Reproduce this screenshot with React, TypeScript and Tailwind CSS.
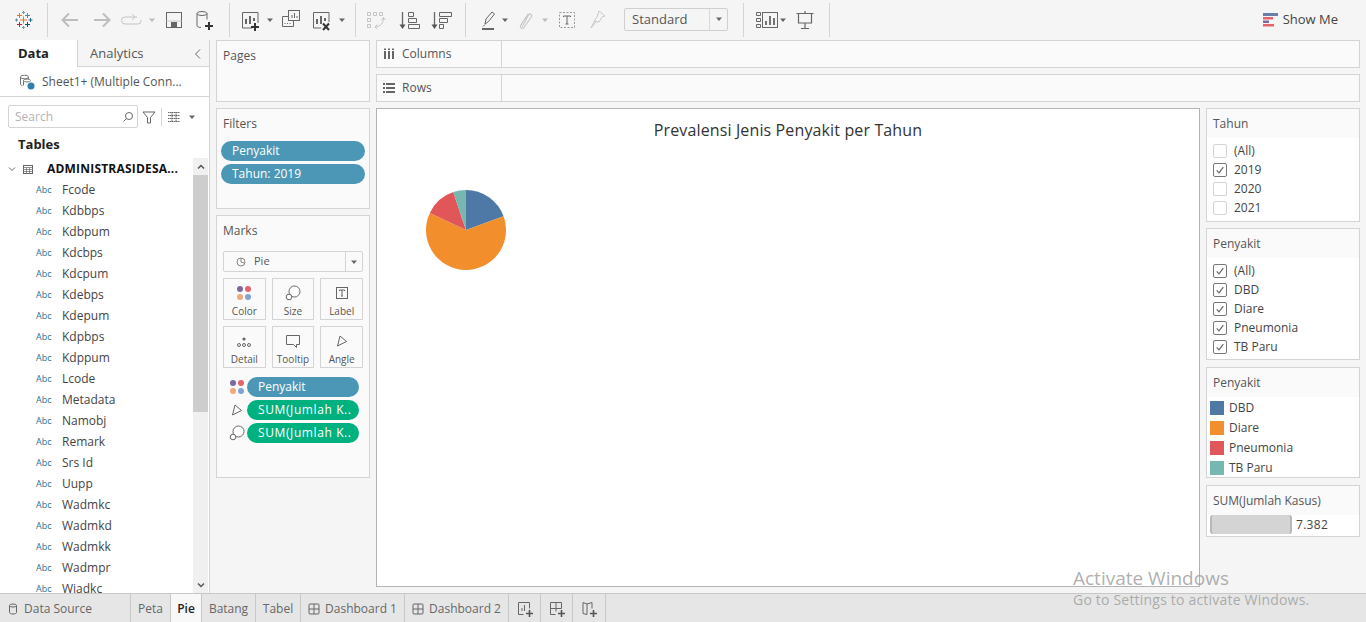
import React from 'react';

const fields = ['Fcode', 'Kdbbps', 'Kdbpum', 'Kdcbps', 'Kdcpum', 'Kdebps', 'Kdepum', 'Kdpbps', 'Kdppum', 'Lcode', 'Metadata', 'Namobj', 'Remark', 'Srs Id', 'Uupp', 'Wadmkc', 'Wadmkd', 'Wadmkk', 'Wadmpr', 'Wiadkc'];

const Icon = ({ className = '', children, stroke = '#666' }: { className?: string; children: React.ReactNode; stroke?: string }) => (
  <svg viewBox="0 0 24 24" width="24" height="24" fill="none" stroke={stroke} strokeWidth="1" className={`shrink-0 ${className}`}>
    {children}
  </svg>
);

const Caret = ({ className = '', color = '#666' }: { className?: string; color?: string }) => (
  <svg viewBox="0 0 8 8" width="8" height="8" className={`shrink-0 ${className}`}>
    <path d="M1 2.500h6L4 6z" fill={color} />
  </svg>
);

const Sep = ({ className = '' }: { className?: string }) => <div className={`w-px h-[34px] bg-[#d4d4d4] shrink-0 ${className}`} />;

const Plus = ({ x, y, c, s = 2.5, w = 1 }: { x: number; y: number; c: string; s?: number; w?: number }) => (
  <path d={`M${x - s} ${y}h${s * 2}M${x} ${y - s}v${s * 2}`} stroke={c} strokeWidth={w} />
);

const ColorDots = () => (
  <svg viewBox="0 0 18 18" width="18" height="18" className="shrink-0">
    <circle cx="5" cy="5" r="3" fill="#7b6a9b" />
    <circle cx="13" cy="5" r="3" fill="#e5646c" />
    <circle cx="5" cy="13" r="3" fill="#f2a879" />
    <circle cx="13" cy="13" r="3" fill="#7fa4cf" />
  </svg>
);

const SizeGlyph = () => (
  <svg viewBox="0 0 18 18" width="18" height="18" fill="none" stroke="#666" className="shrink-0">
    <circle cx="10.500" cy="7.500" r="5.500" fill="white" />
    <circle cx="5" cy="13" r="2.800" fill="white" />
  </svg>
);

const AngleGlyph = () => (
  <svg viewBox="0 0 18 18" width="18" height="18" fill="none" stroke="#666" className="shrink-0">
    <path d="M7 4l6.500 5.500L4.500 14z" />
  </svg>
);

const MarkButton = ({ label, children }: { label: string; children: React.ReactNode }) => (
  <div className="h-[42px] border border-[#d4d4d4] flex flex-col items-center justify-between pt-[5px] pb-[1px] text-[10px] leading-[14px] text-[#555]">
    <div className="h-[18px] flex items-center justify-center">{children}</div>
    <span>{label}</span>
  </div>
);

const Pill = ({ label, green = false }: { label: string; green?: boolean }) => (
  <div className={`h-5 rounded-full pl-[11px] text-[12px] leading-5 text-white whitespace-nowrap ${green ? 'bg-[#00b180] tracking-[0.6px]' : 'bg-[#4b97b5]'}`}>{label}</div>
);

const Check = ({ on, label }: { on: boolean; label: string }) => (
  <div className="h-[19px] flex items-center pl-[6px] gap-[7px] text-[12px] text-[#444]">
    <span className={`w-[14px] h-[14px] rounded-[2px] border flex items-center justify-center ${on ? 'border-[#777]' : 'border-[#d4d4d4]'}`}>
      {on && (
        <svg viewBox="0 0 12 12" width="10" height="10" fill="none" stroke="#666" strokeWidth="1.400">
          <path d="M2 6.500l2.800 3L10 2.500" />
        </svg>
      )}
    </span>
    {label}
  </div>
);

const CardHeader = ({ title }: { title: string }) => (
  <div className="h-[29px] bg-[#fafafa] pl-[6px] flex items-center text-[12px] text-[#555] whitespace-nowrap">{title}</div>
);

const ShelfRow = ({ label, icon }: { label: string; icon: React.ReactNode }) => (
  <div className="h-[28px] flex border border-[#d4d4d4] bg-[#fafafa]">
    <div className="w-[125px] border-r border-[#d4d4d4] flex items-center pl-[6px] gap-[7px] text-[12px] text-[#555]">
      {icon}
      {label}
    </div>
  </div>
);

const Tab = ({ w, active = false, children }: { w: string; active?: boolean; children: React.ReactNode }) => (
  <div className={`${w} shrink-0 h-full pt-px flex items-center justify-center gap-[5px] border-r border-[#c8c8c8] text-[12px] ${active ? 'bg-[#f8f8f8] text-[#222] font-semibold' : 'text-[#666]'}`}>
    {children}
  </div>
);

const DashGlyph = () => (
  <svg viewBox="0 0 12 12" width="12" height="12" fill="none" stroke="#666">
    <rect x="1" y="1" width="10" height="10" rx="1" />
    <path d="M6 1v10M1 6h10" />
  </svg>
);

const TabAdd = ({ children }: { children: React.ReactNode }) => (
  <svg viewBox="0 0 18 18" width="18" height="18" fill="none" stroke="#666">
    {children}
    <path d="M10 13.500h7M13.500 10v7" strokeWidth="1.600" stroke="#555" />
  </svg>
);

export default function App() {
  return (
    <div className="relative w-[1366px] h-[622px] overflow-hidden bg-[#f5f5f5] flex flex-col font-['Open_Sans','Liberation_Sans',sans-serif]">
      {/* toolbar */}
      <div className="h-10 shrink-0 flex items-center pl-3 pr-7">
        <Icon>
          <Plus x={11.500} y={4.500} c="#7a99ae" s={1.500} />
          <Plus x={7.500} y={7.500} c="#e8762c" s={2.500} />
          <Plus x={15.500} y={7.500} c="#5b879f" s={2.500} />
          <Plus x={11.500} y={12} c="#e8762c" s={3.500} />
          <Plus x={7.500} y={16.500} c="#c72037" s={2.500} />
          <Plus x={15.500} y={16.500} c="#1f447a" s={2.500} />
          <Plus x={4.500} y={12} c="#5b879f" s={1.500} />
          <Plus x={18.500} y={12} c="#1f6f99" s={2} />
          <Plus x={11.500} y={19.500} c="#7a99ae" s={1.500} />
        </Icon>
        <Sep className="ml-[11px]" />
        <Icon className="ml-[10px]" stroke="#bdbdbd">
          <path d="M20 12H5M11 5.500L4.500 12l6.500 6.500" strokeWidth="2" />
        </Icon>
        <Icon className="ml-2" stroke="#bdbdbd">
          <path d="M4 12h15M13 5.500l6.500 6.500-6.500 6.500" strokeWidth="2" />
        </Icon>
        <Icon className="ml-[6px]" stroke="#c4c4c4">
          <path d="M17 9H5a3 3 0 0 0 0 7h13a3 3 0 0 0 3-3v-1M12 6l3 3-3 3" />
        </Icon>
        <Caret className="ml-1" color="#bbb" />
        <Icon className="ml-[6px]">
          <rect x="4.500" y="4.500" width="15" height="15" />
          <rect x="9.500" y="14.500" width="5" height="5" fill="#666" />
          <path d="M4.500 13h15" stroke="#ccc" />
        </Icon>
        <Icon className="ml-[7px]">
          <ellipse cx="9" cy="5.500" rx="5" ry="2" />
          <path d="M4 5.500v12c0 1 1.500 2 4 2M14 5.500v6" />
          <path d="M12 18h8M16 14v8" stroke="#333" strokeWidth="2" />
        </Icon>
        <Sep className="ml-3" />
        <Icon className="ml-2">
          <path d="M20 15V4.500H4.500V20H14" />
          <path d="M8 11v5M12 8v8M16 10v3" strokeWidth="2" />
          <path d="M13 19h8M17 15v8" stroke="#333" strokeWidth="2" />
        </Icon>
        <Caret className="ml-1" />
        <Icon className="ml-[5px]">
          <rect x="9.500" y="2.500" width="11" height="10" />
          <path d="M13 10V7M15.500 10V5M18 10V8" />
          <path d="M9.500 8.500h-6v10h11v-6" />
          <path d="M6 16v-1M8.500 16v-1M11 16v-1" />
        </Icon>
        <Icon className="ml-[6px]">
          <path d="M20 14V4.500H4.500V20H12" />
          <path d="M8 11v5M12 8v8M16 10v3" strokeWidth="2" />
          <path d="M14 15.500l6 6.500M20 15.500l-6 6.500" stroke="#333" strokeWidth="2" />
        </Icon>
        <Caret className="ml-[5px]" />
        <Sep className="ml-[9px]" />
        <Icon className="ml-2" stroke="#c4c4c4">
          <path d="M3.500 4.500h3v3h-3zM9.500 4.500h3v3h-3zM15.500 4.500h3v3h-3zM3.500 10.500h3v3h-3zM3.500 16.500h3v3h-3z" />
          <path d="M19.500 10c0 5-3 8.500-8 9M17.500 12l2-2.500 2 2.500M13.500 16.500l-2.500 2.500 2.500 2" />
        </Icon>
        <Icon className="ml-[9px]">
          <path d="M5.500 4v15" strokeWidth="1.300" />
          <path d="M2.500 16.500h6L5.500 21z" fill="#555" stroke="none" />
          <path d="M11.500 4.500h5v4h-5zM11.500 10.500h8v4h-8zM11.500 16.500h11v4h-11z" />
        </Icon>
        <Icon className="ml-2">
          <path d="M5.500 4v15" strokeWidth="1.300" />
          <path d="M2.500 16.500h6L5.500 21z" fill="#555" stroke="none" />
          <path d="M10.500 4.500h12v4h-12zM10.500 10.500h8v4h-8zM10.500 16.500h4v4h-4z" />
        </Icon>
        <Sep className="ml-3" />
        <Icon className="ml-[10px]">
          <path d="M9 16l1-5 6-7 2.500 2-6 7.500z" />
          <path d="M6 21h12" stroke="#666" strokeWidth="2" />
          <path d="M7 18.500l2-2" />
        </Icon>
        <Caret className="ml-px" />
        <Icon className="ml-1" stroke="#c8c8c8">
          <path d="M9 19l6.500-12c1-2 4-.5 3 1.500l-7.500 11c-1.500 2-4.500.5-3.500-2L15 6" strokeWidth="1.200" />
        </Icon>
        <Caret className="ml-1" color="#bbb" />
        <Icon className="ml-[6px]" stroke="#999">
          <rect x="4.500" y="4.500" width="15" height="15" strokeDasharray="2 1.500" />
          <path d="M8.500 9V8h7v1M12 8v8M10.500 16h3" stroke="#666" />
        </Icon>
        <Icon className="ml-[6px]" stroke="#c8c8c8">
          <path d="M14 3l6 5-3 1-3 5-5-1 3-4zM11 14l-5 6 3.500-7" />
        </Icon>
        <div className="ml-[15px] mb-[2px] w-[104px] h-[23px] flex border border-[#d0d0d0] rounded-[2px] text-[13px] text-[#555]">
          <div className="flex-1 pl-[7px] leading-[20px] border-r border-[#d8d8d8]">Standard</div>
          <div className="w-[17px] flex items-center justify-center">
            <Caret />
          </div>
        </div>
        <Sep className="ml-[15px]" />
        <Icon className="ml-[11px]">
          <path d="M1.500 4.500h4v3h-4zM1.500 10.500h4v3h-4zM1.500 16.500h4v3h-4z" />
          <rect x="7.500" y="4.500" width="15" height="15" />
          <path d="M11 17v-4M15 17V8M19 17v-7" strokeWidth="1.800" />
        </Icon>
        <Caret />
        <Icon className="ml-[6px]">
          <path d="M3.500 5.500h17M5.500 5.500v9.500h13V5.500M12 3v2.500M12 15v5M8 20.500h8" strokeWidth="1.200" />
        </Icon>
        <Sep className="ml-3" />
        <div className="ml-auto flex items-center gap-[5px] text-[13px] text-[#444]">
          <svg viewBox="0 0 15 14" width="15" height="14">
            <rect x="0" y="0" width="15" height="3" fill="#6a7fa8" />
            <rect x="0" y="4" width="10" height="2.500" fill="#e5646c" />
            <rect x="0" y="7.500" width="6" height="2.500" fill="#7b6a9b" />
            <rect x="0" y="11" width="11" height="2.500" fill="#e5646c" />
          </svg>
          Show Me
        </div>
      </div>

      <div className="flex-1 min-h-0 flex">
        {/* data pane */}
        <div className="w-[210px] shrink-0 bg-white border-r border-[#d4d4d4] flex flex-col min-h-0">
          <div className="h-[27px] shrink-0 flex text-[13px] text-[#555]">
            <div className="w-[77px] pl-[18px] font-bold text-[#222] leading-[26px]">Data</div>
            <div className="flex-1 flex items-center justify-between pl-[12px] pr-[7px] pt-px bg-[#f5f5f5] border-l border-b border-[#d4d4d4]">
              Analytics
              <svg viewBox="0 0 8 12" width="8" height="12" fill="none" stroke="#666">
                <path d="M6 1.500L1.500 6 6 10.500" />
              </svg>
            </div>
          </div>
          <div className="h-[30px] shrink-0 flex items-center pl-[19px] gap-[7px] border-b border-[#d4d4d4] text-[12px] text-[#555]">
            <svg viewBox="0 0 16 16" width="16" height="16" fill="none" stroke="#777" className="shrink-0">
              <ellipse cx="5.500" cy="3" rx="4" ry="1.800" />
              <path d="M1.500 3v7c0 1 1 1.500 2 1.800M9.500 3v2" />
              <ellipse cx="8" cy="6.500" rx="3.500" ry="1.500" />
              <path d="M4.500 6.500v5" />
              <circle cx="12" cy="12" r="3.500" fill="#2f7fa8" stroke="none" />
            </svg>
            Sheet1+ (Multiple Conn...
          </div>
          <div className="shrink-0 flex items-center pl-2 mt-2">
            <div className="w-[130px] h-[23px] border border-[#d4d4d4] rounded-[2px] flex items-center justify-between pl-[6px] pr-[3px] text-[12px] text-[#b4b4b4]">
              Search
              <svg viewBox="0 0 12 12" width="12" height="12" fill="none" stroke="#666">
                <circle cx="7" cy="5" r="3.500" />
                <path d="M4.500 7.500L1.500 10.500" />
              </svg>
            </div>
            <svg viewBox="0 0 14 14" width="14" height="14" fill="none" stroke="#666" className="ml-[4px]">
              <path d="M1 2h12L8.500 7.500V13h-3V7.500z" />
            </svg>
            <div className="w-px h-[18px] bg-[#d4d4d4] ml-[5px]" />
            <svg viewBox="0 0 14 12" width="14" height="12" fill="none" stroke="#666" className="ml-[5px]">
              <path d="M1 1.500h12M1 4.500h12M1 7.500h12M1 10.500h12M5 1v10M9 1v10" strokeDasharray="1.500 0.500" />
            </svg>
            <Caret className="ml-[7px]" />
          </div>
          <div className="shrink-0 pl-[18px] mt-[6px] h-5 text-[13px] leading-5 font-bold text-[#222]">Tables</div>
          <div className="flex-1 min-h-0 flex mt-[4px]">
            <div className="flex-1 min-w-0 overflow-hidden">
              <div className="h-[21px] flex items-center pl-2 text-[12px] font-bold text-[#111] tracking-[0.2px]">
                <svg viewBox="0 0 8 8" width="8" height="8" fill="none" stroke="#666">
                  <path d="M1 2.500L4 5.500 7 2.500" />
                </svg>
                <svg viewBox="0 0 12 12" width="12" height="12" fill="none" stroke="#666" className="ml-[6px]">
                  <rect x="1.500" y="2.500" width="9" height="8" />
                  <path d="M1.500 4.500h9M1.500 6.500h9M1.500 8.500h9M4.500 4.500v6M7.500 4.500v6" strokeWidth="0.700" />
                </svg>
                <span className="ml-[13px] whitespace-nowrap">ADMINISTRASIDESA...</span>
              </div>
              {fields.map((f) => (
                <div key={f} className="h-[21px] flex items-center text-[12px] text-[#444]">
                  <span className="w-[62px] pl-9 text-[9px] text-[#2f6f8f]">Abc</span>
                  {f}
                </div>
              ))}
            </div>
            <div className="w-[15px] shrink-0 mr-px bg-[#f0f0f0] flex flex-col">
              <div className="h-[17px] flex items-center justify-center">
                <svg viewBox="0 0 8 8" width="8" height="8" fill="none" stroke="#555" strokeWidth="1.500">
                  <path d="M1 5.500L4 2.500 7 5.500" />
                </svg>
              </div>
              <div className="h-[237px] bg-[#cdcdcd]" />
              <div className="flex-1" />
              <div className="h-[17px] flex items-center justify-center">
                <svg viewBox="0 0 8 8" width="8" height="8" fill="none" stroke="#555" strokeWidth="1.500">
                  <path d="M1 2.500L4 5.500 7 2.500" />
                </svg>
              </div>
            </div>
          </div>
        </div>

        {/* shelves column */}
        <div className="w-[154px] ml-[6px] shrink-0 flex flex-col text-[12px] text-[#555]">
          <div className="h-[62px] border border-[#d4d4d4] bg-[#fafafa] pl-[6px] pt-[6px]">Pages</div>
          <div className="h-[101px] mt-[6px] border border-[#d4d4d4] bg-[#fafafa]">
            <div className="pl-[6px] pt-[6px] h-[32px]">Filters</div>
            <div className="flex flex-col gap-[3px] px-1">
              <Pill label="Penyakit" />
              <Pill label="Tahun: 2019" />
            </div>
          </div>
          <div className="h-[263px] mt-[6px] border border-[#d4d4d4] bg-[#fafafa]">
            <div className="pl-[6px] pt-[6px] h-[35px]">Marks</div>
            <div className="mx-[6px] h-[21px] border border-[#d4d4d4] rounded-[2px] flex text-[11px]">
              <div className="flex-1 flex items-center pl-3 gap-2 border-r border-[#d4d4d4]">
                <svg viewBox="0 0 10 10" width="10" height="10" fill="none" stroke="#888">
                  <circle cx="5" cy="5" r="4" />
                  <path d="M5 5V1M5 5l3 1" />
                </svg>
                Pie
              </div>
              <div className="w-4 flex items-center justify-center">
                <Caret />
              </div>
            </div>
            <div className="mx-[6px] mt-[6px] grid grid-cols-3 gap-x-[6px] gap-y-[6px]">
              <MarkButton label="Color">
                <ColorDots />
              </MarkButton>
              <MarkButton label="Size">
                <SizeGlyph />
              </MarkButton>
              <MarkButton label="Label">
                <svg viewBox="0 0 16 16" width="16" height="16" fill="none" stroke="#666">
                  <rect x="2.500" y="2.500" width="11" height="11" />
                  <path d="M5.500 6V5h5v1M8 5v6M7 11h2" />
                </svg>
              </MarkButton>
              <MarkButton label="Detail">
                <svg viewBox="0 0 16 16" width="16" height="16" fill="none" stroke="#666">
                  <circle cx="8" cy="6" r="1.600" fill="#666" stroke="none" />
                  <circle cx="3" cy="12" r="1.500" />
                  <circle cx="8" cy="12" r="1.500" />
                  <circle cx="13" cy="12" r="1.500" />
                </svg>
              </MarkButton>
              <MarkButton label="Tooltip">
                <svg viewBox="0 0 16 16" width="16" height="16" fill="none" stroke="#666">
                  <path d="M1.500 2.500h13v9h-3v3l-3-3h-7z" />
                </svg>
              </MarkButton>
              <MarkButton label="Angle">
                <AngleGlyph />
              </MarkButton>
            </div>
            <div className="mt-[9px] flex flex-col gap-[3px] pl-[12px] pr-[10px]">
              <div className="flex items-center gap-[2px]">
                <div className="w-4 flex justify-center"><ColorDots /></div>
                <div className="flex-1 min-w-0"><Pill label="Penyakit" /></div>
              </div>
              <div className="flex items-center gap-[2px]">
                <div className="w-4 flex justify-center"><AngleGlyph /></div>
                <div className="flex-1 min-w-0"><Pill green label="SUM(Jumlah K.." /></div>
              </div>
              <div className="flex items-center gap-[2px]">
                <div className="w-4 flex justify-center"><SizeGlyph /></div>
                <div className="flex-1 min-w-0"><Pill green label="SUM(Jumlah K.." /></div>
              </div>
            </div>
          </div>
        </div>

        {/* worksheet */}
        <div className="flex-1 min-w-0 ml-[6px] mr-[6px] flex flex-col">
          <ShelfRow
            label="Columns"
            icon={
              <svg viewBox="0 0 12 12" width="12" height="12" className="shrink-0">
                <path d="M1 3h2v8H1zM5 3h2v8H5zM9 3h2v8H9zM1 .5h2v1.500H1zM5 .5h2v1.500H5zM9 .5h2v1.500H9z" fill="#666" />
              </svg>
            }
          />
          <div className="mt-[6px]">
            <ShelfRow
              label="Rows"
              icon={
                <svg viewBox="0 0 12 12" width="12" height="12" className="shrink-0">
                  <path d="M0 1h2v2H0zM0 5h2v2H0zM0 9h2v2H0zM3 1h9v2H3zM3 5h9v2H3zM3 9h9v2H3z" fill="#666" />
                </svg>
              }
            />
          </div>
          <div className="mt-[6px] flex gap-[6px] h-[479px]">
            <div className="w-[824px] shrink-0 bg-white border border-[#b4b4b4]">
              <div className="text-center pt-[11px] text-[16px] tracking-[0.13px] leading-5 text-[#333]">Prevalensi Jenis Penyakit per Tahun</div>
              <svg viewBox="0 0 80 80" width="80" height="80" className="ml-[49px] mt-[50px]">
                <path d="M40 40V0A40 40 0 0 1 77.59 26.32z" fill="#4e79a7" />
                <path d="M40 40L77.59 26.32A40 40 0 1 1 3.85 22.89z" fill="#f28e2b" />
                <path d="M40 40L3.85 22.89A40 40 0 0 1 27.24 2.09z" fill="#e15759" />
                <path d="M40 40L27.24 2.09A40 40 0 0 1 40 0z" fill="#76b7b2" />
              </svg>
            </div>
            <div className="w-[154px] shrink-0 flex flex-col">
              <div className="h-[114px] border border-[#d4d4d4] bg-white">
                <CardHeader title="Tahun" />
                <div className="pt-[3px]">
                  <Check on={false} label="(All)" />
                  <Check on label="2019" />
                  <Check on={false} label="2020" />
                  <Check on={false} label="2021" />
                </div>
              </div>
              <div className="h-[132px] mt-[6px] border border-[#d4d4d4] bg-white">
                <CardHeader title="Penyakit" />
                <div className="pt-[3px]">
                  <Check on label="(All)" />
                  <Check on label="DBD" />
                  <Check on label="Diare" />
                  <Check on label="Pneumonia" />
                  <Check on label="TB Paru" />
                </div>
              </div>
              <div className="h-[111px] mt-[7px] border border-[#d4d4d4] bg-white">
                <CardHeader title="Penyakit" />
                <div className="pt-[1px]">
                  {[
                    ['DBD', 'bg-[#4e79a7]'],
                    ['Diare', 'bg-[#f28e2b]'],
                    ['Pneumonia', 'bg-[#e15759]'],
                    ['TB Paru', 'bg-[#76b7b2]'],
                  ].map(([n, c]) => (
                    <div key={n} className="h-5 flex items-center pl-[3px] gap-[5px] text-[12px] text-[#444]">
                      <span className={`w-[14px] h-[14px] ${c}`} />
                      {n}
                    </div>
                  ))}
                </div>
              </div>
              <div className="h-[52px] mt-[7px] border border-[#d4d4d4] bg-white">
                <CardHeader title="SUM(Jumlah Kasus)" />
                <div className="flex items-center pl-[3px] gap-1 text-[12px] tracking-[0.3px] text-[#444]">
                  <span className="w-[82px] h-[19px] bg-[#d4d4d4] rounded-[3px] border-x-2 border-[#b8b8b8]" />
                  7.382
                </div>
              </div>
            </div>
          </div>
        </div>
      </div>

      {/* tabs */}
      <div className="h-[29px] shrink-0 flex items-center bg-[#e6e6e6] border-t border-[#c8c8c8]">
        <Tab w="w-[131px]">
          <span className="flex items-center gap-[5px] mr-[31px]">
            <svg viewBox="0 0 12 12" width="12" height="12" fill="none" stroke="#666">
              <ellipse cx="6" cy="2.500" rx="3.500" ry="1.500" />
              <path d="M2.500 2.500v7c0 2 7 2 7 0v-7" />
            </svg>
            Data Source
          </span>
        </Tab>
        <Tab w="w-[40px]">Peta</Tab>
        <Tab w="w-[31px]" active>Pie</Tab>
        <Tab w="w-[54px]">Batang</Tab>
        <Tab w="w-[45px]">Tabel</Tab>
        <Tab w="w-[104px]"><DashGlyph />Dashboard 1</Tab>
        <Tab w="w-[104px]"><DashGlyph />Dashboard 2</Tab>
        <Tab w="w-[32px]">
          <TabAdd>
            <path d="M2.500 14.500v-12h11v6M2.500 14.500h5M6 11V8M8.500 11V5" />
          </TabAdd>
        </Tab>
        <Tab w="w-[32px]">
          <TabAdd>
            <path d="M2.500 14.500v-12h11v6M2.500 14.500h5M2.500 8.500h11M8 2.500v9" />
          </TabAdd>
        </Tab>
        <Tab w="w-[33px]">
          <TabAdd>
            <path d="M3 2.500l4 1.500 5-1.500v6M3 2.500v11l4 1V4" />
          </TabAdd>
        </Tab>
      </div>

      {/* windows activation watermark */}
      <div className="absolute left-[1073px] top-[566px] text-[#9a9a9a]/80 pointer-events-none whitespace-nowrap">
        <div className="text-[19px] leading-[24px]">Activate Windows</div>
        <div className="text-[14px] tracking-[0.2px] leading-[20px]">Go to Settings to activate Windows.</div>
      </div>
    </div>
  );
}
